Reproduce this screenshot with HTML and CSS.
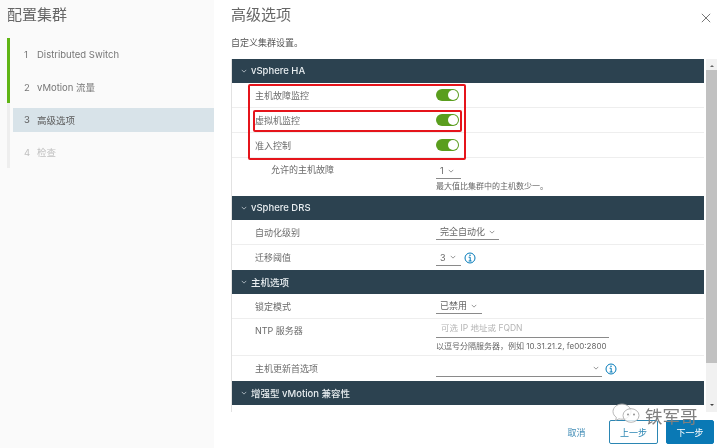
FILE: index.html
```html
<!DOCTYPE html>
<html lang="zh-CN">
<head>
<meta charset="utf-8">
<title>配置集群</title>
<link rel="stylesheet" href="styles.css">
</head>
<body>
<div class="app">
  <aside class="side">
    <h1 class="side-title">配置集群</h1>
    <ol class="steps">
      <li class="step done"><span class="num">1</span>Distributed Switch</li>
      <li class="step done"><span class="num">2</span>vMotion 流量</li>
      <li class="step current"><span class="num">3</span>高级选项</li>
      <li class="step todo"><span class="num">4</span>检查</li>
    </ol>
  </aside>
  <main class="main">
    <div class="head">
      <h2 class="title">高级选项</h2>
      <svg class="close" viewBox="0 0 12 12"><path d="M1 1l10 10M11 1L1 11"/></svg>
    </div>
    <p class="desc">自定义集群设置。</p>
    <div class="scroller">
      <div class="table">
        <div class="sec"><svg class="chev light" viewBox="0 0 8 5"><path d="M1 1l3 3 3-3"/></svg>vSphere HA</div>
        <div class="row"><span class="lab">主机故障监控</span><span class="toggle"></span></div>
        <div class="row"><span class="lab">虚拟机监控</span><span class="toggle"></span></div>
        <div class="row"><span class="lab">准入控制</span><span class="toggle"></span></div>
        <div class="row tall plain">
          <span class="lab sub">允许的主机故障</span>
          <div class="val">
            <span class="sel s1">1<svg class="chev" viewBox="0 0 8 5"><path d="M1 1l3 3 3-3"/></svg></span>
            <span class="hint">最大值比集群中的主机数少一。</span>
          </div>
        </div>
        <div class="sec"><svg class="chev light" viewBox="0 0 8 5"><path d="M1 1l3 3 3-3"/></svg>vSphere DRS</div>
        <div class="row"><span class="lab">自动化级别</span><span class="sel s2">完全自动化<svg class="chev" viewBox="0 0 8 5"><path d="M1 1l3 3 3-3"/></svg></span></div>
        <div class="row plain"><span class="lab">迁移阈值</span><span class="sel s1">3<svg class="chev" viewBox="0 0 8 5"><path d="M1 1l3 3 3-3"/></svg></span>
          <svg class="info" viewBox="0 0 12 12"><circle cx="6" cy="6" r="5"/><path d="M4.600 5.200H6.200V9M4.600 9H7.600"/><circle class="dot" cx="6" cy="3.200" r=".8"/></svg></div>
        <div class="sec"><svg class="chev light" viewBox="0 0 8 5"><path d="M1 1l3 3 3-3"/></svg>主机选项</div>
        <div class="row"><span class="lab">锁定模式</span><span class="sel s3">已禁用<svg class="chev" viewBox="0 0 8 5"><path d="M1 1l3 3 3-3"/></svg></span></div>
        <div class="row ntp">
          <span class="lab">NTP 服务器</span>
          <div class="val">
            <span class="input">可选 IP 地址或 FQDN</span>
            <span class="hint">以逗号分隔服务器，例如 10.31.21.2, fe00:2800</span>
          </div>
        </div>
        <div class="row plain"><span class="lab">主机更新首选项</span><span class="sel s4"><svg class="chev" viewBox="0 0 8 5"><path d="M1 1l3 3 3-3"/></svg></span>
          <svg class="info" viewBox="0 0 12 12"><circle cx="6" cy="6" r="5"/><path d="M4.600 5.200H6.200V9M4.600 9H7.600"/><circle class="dot" cx="6" cy="3.200" r=".8"/></svg></div>
        <div class="sec">
          <svg class="chev light" viewBox="0 0 8 5"><path d="M1 1l3 3 3-3"/></svg>增强型 vMotion 兼容性</div>
        <div class="mark outer"></div>
        <div class="mark inner"></div>
      </div>
      <div class="scrollbar">
        <span class="arrow up"></span>
        <span class="thumb"></span>
        <span class="arrow down"></span>
      </div>
    </div>
    <div class="foot">
      <button class="btn link">取消</button>
      <button class="btn outline">上一步</button>
      <button class="btn primary">下一步</button>
    </div>
  </main>
</div>
<div class="wm">
  <svg class="wm-icon" viewBox="0 0 28 21"><path class="b1" d="M10 1C5 1 1 4.500 1 8.500c0 2.500 1.400 4.500 3.400 6L3.500 17.500l3.500-1.700c1 .3 2 .4 3 .4 5 0 9-3.500 9-7.500S15 1 10 1z"/><ellipse class="b2" cx="19" cy="12.500" rx="8" ry="6.800"/><circle class="d" cx="16" cy="11.500" r=".9"/><circle class="d" cx="22" cy="11.500" r=".9"/></svg>
  <span class="wm-text">铁军哥</span>
</div>
</body>
</html>
```

FILE: styles.css
```css
* { box-sizing: border-box; }
html, body { margin: 0; padding: 0; width: 720px; height: 448px; overflow: hidden; background: #fff; }
body { font-family: "Inter", "Noto Sans CJK SC", sans-serif; color: #565656; position: relative; }
.app { display: flex; height: 448px; filter: blur(.35px); }

.side { width: 214px; background: #fafafa; flex: none; }
.side-title { margin: 0; padding: 3px 0 0 7px; font-size: 15px; line-height: 23px; font-weight: 400; color: #666; }
.steps { list-style: none; margin: 12px 0 0 7px; padding: 4.500px 0 0; border-left: 3px solid #eee; height: 130px; position: relative; }
.steps::before { content: ""; position: absolute; left: -3px; top: 0; width: 3px; height: 65px; background: #60b515; }
.step { height: 24px; margin: 0 0 8.500px 3px; padding-left: 11px; display: flex; align-items: center; font-size: 9.500px; color: #777; }
.step .num { width: 13px; flex: none; }
.step.current { background: #d8e3e9; color: #5c5c5c; }
.step.todo { color: #c0c0c0; }

.main { flex: 1; padding: 0 0 0 17px; display: flex; flex-direction: column; min-width: 0; }
.head { display: flex; justify-content: space-between; align-items: flex-start; height: 28px; padding-top: 5px; }
.title { margin: 0; font-size: 15px; line-height: 19px; font-weight: 400; color: #666; }
.close { width: 10px; height: 10px; margin: 8px 9px 0 0; }
.close path { stroke: #6a6a6a; stroke-width: 1.100; fill: none; }
.desc { margin: 8px 0 0; font-size: 9px; line-height: 14px; color: #555; height: 23px; }

.scroller { display: flex; height: 353px; align-items: stretch; }
.table { width: 473px; border-left: 1px solid #e2e2e2; height: 353px; overflow: hidden; position: relative; flex: none; }
.sec { height: 24px; margin-left: -1px; background: #2c4250; color: #e8edf0; font-size: 9.500px; font-weight: 500; display: flex; align-items: center; padding: 0 0 1px 10px; white-space: nowrap; }
.chev { width: 6px; height: 4px; flex: none; }
.chev path { fill: none; stroke: #777; stroke-width: 1; }
.chev.light { margin-right: 4px; }
.chev.light path { stroke: #c9d3d9; }

.row { height: 25px; display: flex; align-items: center; border-bottom: 1px solid #eee; padding-left: 23px; position: relative; font-size: 9px; color: #6b6b6b; }
.row.plain { border-bottom: 0; }
.lab { width: 181px; flex: none; color: #6b6b6b; }
.lab.sub { padding-left: 16px; }
.row.tall { height: 38px; align-items: flex-start; padding-top: 5px; }
.row.ntp { height: 37px; align-items: flex-start; padding-top: 2px; }
.row.ntp .lab { padding-top: 3px; }
.val { display: flex; flex-direction: column; }
.hint { font-size: 8px; line-height: 12px; color: #666; white-space: nowrap; }
.toggle { width: 23px; height: 12px; background: #5a9e1e; border-radius: 6px; position: relative; display: block; }
.toggle::after { content: ""; position: absolute; right: 1px; top: 1px; width: 10px; height: 10px; border-radius: 50%; background: #fff; }

.sel { display: inline-flex; align-items: center; gap: 4px; height: 16px; border-bottom: 1px solid #8a8a8a; padding-left: 4px; font-size: 9px; color: #666; flex: none; }
.s1 { width: 25px; }
.s2 { width: 63px; }
.s3 { width: 46px; }
.s4 { width: 166px; justify-content: flex-end; padding-right: 3px; }
.tall .sel { margin-bottom: 1px; }
.info { width: 12px; height: 12px; margin-left: 3px; flex: none; }
.info circle { fill: none; stroke: #0079b8; stroke-width: 1; }
.info path { fill: none; stroke: #0079b8; stroke-width: 1; }
.info .dot { fill: #0079b8; stroke: none; }
.input { display: block; width: 173px; height: 17px; border-bottom: 1px solid #8a8a8a; font-size: 8.500px; line-height: 15px; color: #b5b5b5; padding-left: 5px; margin-bottom: 2px; }

.mark { position: absolute; border: 2px solid #e5141b; border-radius: 2px; pointer-events: none; }
.mark.outer { left: 16px; top: 25px; width: 218px; height: 76px; }
.mark.inner { left: 21px; top: 51px; width: 209px; height: 22px; }

.scrollbar { width: 11px; margin-left: 2px; background: #f1f1f1; display: flex; flex-direction: column; align-items: center; }
.arrow { width: 0; height: 0; border-left: 2px solid transparent; border-right: 2px solid transparent; margin: 6px 0; flex: none; }
.arrow.up { border-bottom: 2px solid #666; margin-bottom: 3px; }
.arrow.down { border-top: 2px solid #444; margin-top: auto; }
.thumb { width: 100%; height: 293px; background: #c1c1c1; flex: none; }

.foot { display: flex; justify-content: flex-end; align-items: center; height: 24px; margin-top: 8px; padding-right: 6px; }
.btn { height: 24px; border-radius: 2px; font: 9px "Inter", "Noto Sans CJK SC", sans-serif; padding: 0; cursor: pointer; }
.link { background: none; border: 0; color: #3f8bb5; width: 29px; margin-right: 18px; }
.outline { background: #fff; border: 1px solid #2b86b3; color: #2b86b3; width: 49px; margin-right: 8px; }
.primary { background: #0a79b5; border: 1px solid #0a79b5; color: #fff; width: 48px; }

.wm { position: absolute; left: 612px; top: 403px; display: flex; align-items: flex-start; gap: 5px; pointer-events: none; filter: blur(.3px); }
.wm-icon { width: 28px; height: 21px; }
.wm-icon .b1, .wm-icon .b2 { fill: rgba(255,255,255,.8); stroke: #a5a5a5; stroke-width: .8; }
.wm-icon .d { fill: #888; }
.wm-text { font-size: 17.500px; line-height: 21px; margin-top: 3px; color: #808080; }
```
